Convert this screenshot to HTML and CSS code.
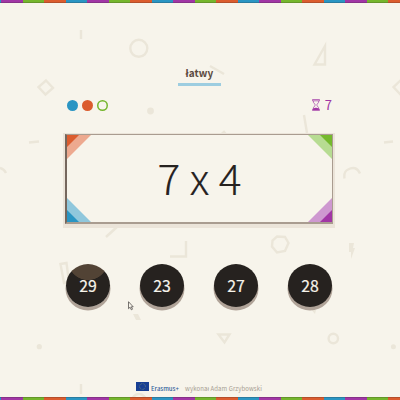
FILE: index.html
```
<!DOCTYPE html>
<html lang="pl">
<head>
<meta charset="utf-8">
<title>łatwy</title>
<link rel="stylesheet" href="styles.css">
</head>
<body>
<svg class="doodles" viewBox="0 0 400 400" aria-hidden="true">
  <g class="lines">
    <path d="M81 30v9M210 66l14 8M304 115l3 18M29 142.500l10-1M384 142.500l9-1M106 237l12-11M186 241v15.500h-16M81 384v10"/>
    <circle cx="138.800" cy="48.300" r="8.500"/>
    <path d="M46 80.500l7 7.500-7.500 6.500L38.500 87zM325 46v18.500h-10.500zM401 80l-7.500 7 7.500 8"/>
    <path d="M0 168q4 1 6 5M344.500 178.500q-1-7 3.500-9 8-4.500 12 4"/>
    <path d="M277 236.500l8 .5 3.500 6-3.500 8-8 1.500-5-6 .5-6zM60.500 264l6-1 2.500 19-5 1zM218.500 334.500h11l-5 8zM217 138l7-6 6 7"/>
    <circle cx="333.300" cy="338.500" r="4.700"/><circle cx="139" cy="401" r="7"/>
  </g>
  <g class="fills">
    <circle cx="150.500" cy="111" r="3.400"/><circle cx="39.300" cy="346.700" r="2.600"/><circle cx="393.400" cy="346.700" r="2.500"/>
    <path d="M133 314h5l3 6h-5zM349 243h5l-1 5h2l-4 11v-7h-2zM310 308l6 2-1 4z"/>
  </g>
</svg>
<div class="stripe stripe-top"></div>
<main class="game">
  <h1 class="level">łatwy</h1>
  <div class="status">
    <div class="lives"><i class="life blue"></i><i class="life orange"></i><i class="life empty"></i></div>
    <div class="timer">
      <svg class="hourglass" viewBox="0 0 8 12"><path class="frame" d="M.5.5h7v1.300h-7zM.5 10.200h7v1.300h-7zM1.300 2c0 3 2 2.700 2 4s-2 1-2 4M6.700 2c0 3-2 2.700-2 4s2 1 2 4"/><path class="sand" d="M1 11c0-2.500 2-1.500 3-2.500 1 1 3 0 3 2.500z"/></svg>
      <span class="seconds">7</span>
    </div>
  </div>
  <section class="card">
    <i class="corner tl"></i><i class="corner tr"></i><i class="corner bl"></i><i class="corner br"></i>
    <span>7 x 4</span>
  </section>
  <div class="answers">
    <button class="answer pressed"><span>29</span></button>
    <button class="answer"><span>23</span></button>
    <button class="answer"><span>27</span></button>
    <button class="answer"><span>28</span></button>
  </div>
</main>
<footer class="footer">
  <svg class="flag" viewBox="0 0 13 9"><rect width="13" height="9"/><circle cx="6.500" cy="4.500" r="2.900"/></svg>
  <span class="brand">Erasmus+</span>
  <span class="author">wykonał Adam Grzybowski</span>
</footer>
<div class="stripe stripe-bottom"></div>
<svg class="cursor" viewBox="0 0 6 10"><path d="M.5.700v7l1.600-1.500 1.200 2.600 1.200-.6-1.200-2.400h1.900z"/></svg>
</body>
</html>
```
FILE: styles.css
```
* { box-sizing: border-box; }
body {
  margin: 0;
  width: 400px;
  height: 400px;
  overflow: hidden;
  position: relative;
  display: flex;
  flex-direction: column;
  background: #f7f4eb;
  color: #26221f;
  font-family: "Noto Sans CJK JP", "Noto Sans", sans-serif;
}
.doodles { position: absolute; inset: 0; width: 400px; height: 400px; z-index: -1; }
.lines { fill: none; stroke: #ebe6d9; stroke-width: 2.400; }
.fills { fill: #ebe6d9; }
.stripe {
  height: 3px;
  flex: none;
  background:
    linear-gradient(transparent 67%, rgba(40, 30, 30, .22) 67%),
    repeating-linear-gradient(90deg, #a136a5 0 21.700px, #75b62d 21.700px 43px, #db5c2e 43px 64.700px, #2a95c3 64.700px 86px) 1px 0 / 86px 3px;
}
.stripe-bottom {
  background:
    linear-gradient(rgba(40, 30, 30, .22) 33%, transparent 33%),
    repeating-linear-gradient(90deg, #a136a5 0 21.700px, #75b62d 21.700px 43px, #db5c2e 43px 64.700px, #2a95c3 64.700px 86px) 1px 0 / 86px 3px;
}
.game { width: 268px; height: 378px; margin-left: 65px; display: flex; flex-direction: column; }
.level {
  margin: 60px auto 0;
  width: 43px;
  height: 23px;
  border-bottom: 3px solid #9dcde0;
  color: #5b4a3e;
  font-size: 10px;
  line-height: 19px;
  font-weight: 700;
  text-align: center;
  letter-spacing: .1px;
  position: relative;
  left: .5px;
}
.status { display: flex; justify-content: space-between; margin-top: 12px; height: 14px; padding: 0 1px 0 1.500px; align-items: center; }
.lives { display: flex; gap: 4px; }
.life { width: 11px; height: 11px; border-radius: 50%; }
.blue { background: #2a95c3; }
.orange { background: #db5c2e; }
.empty { box-shadow: inset 0 0 0 1.500px #75b62d; }
.timer { display: flex; align-items: center; gap: 4.500px; color: #a136a5; font-size: 13px; line-height: 14px; }
.hourglass { width: 8px; height: 12px; }
.frame { fill: none; stroke: #a136a5; stroke-width: .7; }
.sand { fill: #a136a5; }
.card {
  position: relative;
  margin-top: 22px;
  height: 90px;
  padding-bottom: 3px;
  border: 1px solid #a99c90;
  border-width: 1px 1px 2px 2px;
  border-left-color: #75675d;
  box-shadow: 0 1px 0 2px #ebe4d9, 0 2px 0 2px #ebe4d9;
  background: #f7f4eb;
  display: flex;
  align-items: center;
  justify-content: center;
  font-size: 42.500px;
  line-height: 60px;
  font-weight: 300;
  -webkit-text-stroke: .15px #26221f;
}
.corner { position: absolute; width: 24px; height: 24px; clip-path: polygon(0 0, 100% 0, 0 100%); background: var(--tint); }
.corner::before { content: ""; display: block; width: 12px; height: 12px; background: var(--tone); clip-path: polygon(0 0, 100% 0, 0 100%); }
.tl { left: 0; top: 0; --tone: #db5c2e; --tint: #eda98f; }
.tr { right: 0; top: 0; transform: scaleX(-1); --tone: #75b92d; --tint: #b7dc92; }
.bl { left: 0; bottom: 0; transform: scaleY(-1); --tone: #2a95c3; --tint: #90c7dc; }
.br { right: 0; bottom: 0; transform: scale(-1); --tone: #a136a5; --tint: #ce98d0; }
.answers { margin: 40px 0 0 1px; display: flex; gap: 30px; }
.answer {
  flex: none;
  width: 44px;
  height: 43px;
  padding: 0;
  border: 0;
  border-radius: 50%;
  background: #26221f;
  box-shadow: 0 3px 0 .5px #b0a398;
  color: #f7f4eb;
  font: 400 15.800px/43px "Noto Sans CJK JP", "Noto Sans", sans-serif;
  -webkit-text-stroke: .2px #f7f4eb;
}
.pressed { background: radial-gradient(circle at 22px -4px, #524335 19.700px, #26221f 20.300px); }
.footer { height: 16px; display: flex; align-items: flex-start; padding: 1px 0 0 136px; font-size: 6px; line-height: 13px; white-space: nowrap; }
.flag { width: 13px; height: 9px; margin-right: 2px; }
.flag rect { fill: #183f93; }
.flag circle { fill: none; stroke: #9ba768; stroke-width: .7; stroke-dasharray: .6 .92; }
.brand { width: 34px; color: #315f9b; font-weight: 500; }
.author { color: #a69c91; letter-spacing: .1px; }
.cursor { position: absolute; left: 128px; top: 301px; width: 6px; height: 10px; }
.cursor path { fill: #f7f4eb; stroke: #403c3b; stroke-width: .7; }
```
